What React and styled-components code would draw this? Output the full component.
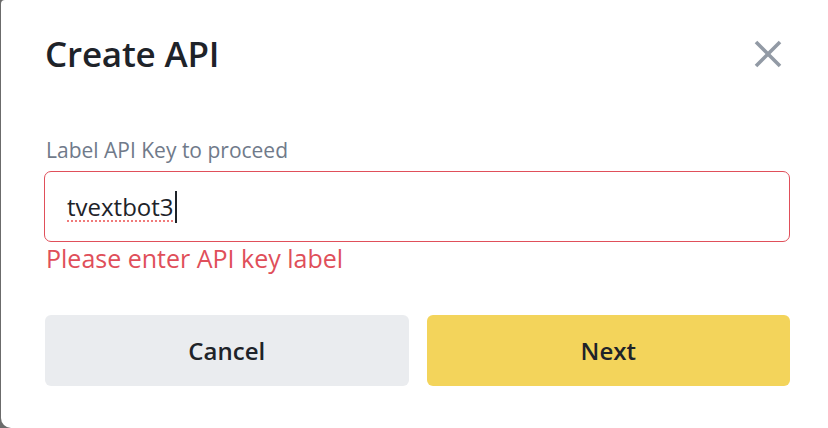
import React from 'react'
import styled, { createGlobalStyle } from 'styled-components'

const GlobalStyle = createGlobalStyle`
  html, body {
    margin: 0;
    padding: 0;
    background: #6b6b6b;
    font-family: "Open Sans", Roboto, "Liberation Sans", sans-serif;
  }
`

const Backdrop = styled.div`
  width: 828px;
  height: 428px;
  display: flex;
  padding-left: 1px;
  box-sizing: border-box;
  overflow: hidden;
`

const Modal = styled.div`
  flex: 1;
  background: #fff;
  border-radius: 4px 0 0 10px;
  padding: 34px 38px 0 43px;
  display: flex;
  flex-direction: column;
`

const Header = styled.div`
  display: flex;
  align-items: center;
  justify-content: space-between;
  height: 40px;
`

const Title = styled.h2`
  margin: 0 0 0 1px;
  font-size: 35px;
  font-weight: 600;
  color: #1e2329;
  line-height: 40px;
  letter-spacing: -0.2px;
`

const CloseButton = styled.button`
  border: 0;
  background: none;
  padding: 0;
  width: 32px;
  height: 32px;
  margin-right: 6px;
  display: flex;
  align-items: center;
  justify-content: center;
  cursor: pointer;
`

const Label = styled.div`
  margin-top: 64px;
  margin-left: 2px;
  font-size: 21px;
  color: #707a8a;
  line-height: 24px;
`

const Field = styled.div`
  margin-top: 9px;
  height: 71px;
  box-sizing: border-box;
  border: 1px solid ${({ $error }) => ($error ? '#e04f5a' : '#eaecef')};
  border-radius: 7px;
  display: flex;
  align-items: center;
  padding-left: 22px;
`

const Value = styled.span`
  font-size: 24px;
  color: #1e2329;
  text-decoration: underline dotted #f07a7a;
  text-decoration-thickness: 2px;
  text-underline-offset: 4px;
`

const Caret = styled.span`
  display: inline-block;
  width: 2px;
  height: 32px;
  background: #1e2329;
  margin-left: 1px;
`

const ErrorText = styled.div`
  margin-top: 1px;
  margin-left: 2px;
  font-size: 25px;
  line-height: 30px;
  color: #e04f5a;
`

const Actions = styled.div`
  margin-top: 42px;
  display: grid;
  grid-template-columns: 1fr 1fr;
  gap: 18px;
  margin-left: 1px;
`

const Button = styled.button`
  height: 71px;
  border: 0;
  border-radius: 6px;
  font-family: inherit;
  font-size: 24px;
  font-weight: 600;
  color: #1e2329;
  background: ${({ $primary }) => ($primary ? '#f3d45b' : '#eaecef')};
  cursor: pointer;
`

export default function App() {
  return (
    <>
      <GlobalStyle />
      <Backdrop>
        <Modal>
          <Header>
            <Title>Create API</Title>
            <CloseButton aria-label="Close">
              <svg width="32" height="32" viewBox="0 0 32 32">
                <path
                  d="M4 4 L28 28 M28 4 L4 28"
                  stroke="#929aa5"
                  strokeWidth="3.6"
                />
              </svg>
            </CloseButton>
          </Header>
          <Label>Label API Key to proceed</Label>
          <Field $error>
            <Value>tvextbot3</Value>
            <Caret />
          </Field>
          <ErrorText>Please enter API key label</ErrorText>
          <Actions>
            <Button>Cancel</Button>
            <Button $primary>Next</Button>
          </Actions>
        </Modal>
      </Backdrop>
    </>
  )
}
